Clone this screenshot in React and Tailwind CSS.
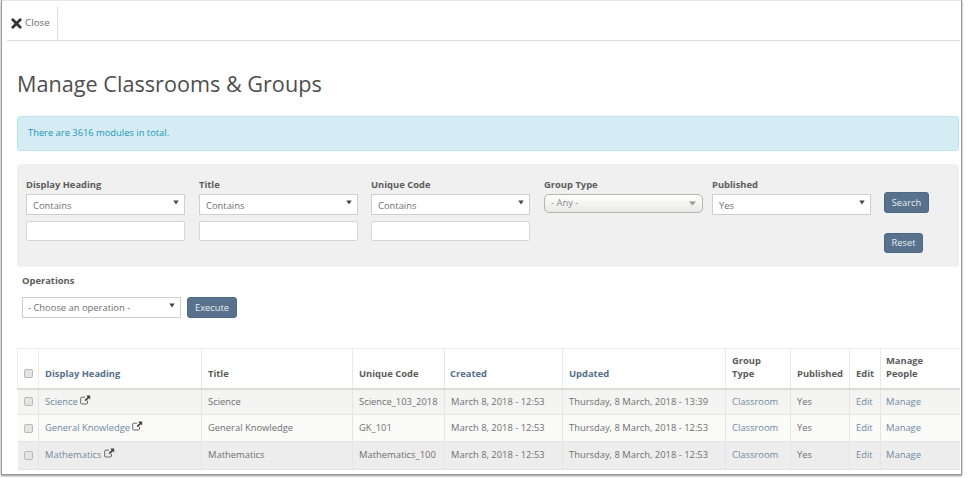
import React from "react";

const Caret = () => (
  <svg width="6" height="5" viewBox="0 0 6 5" className="absolute right-[5px] top-[5px]">
    <path d="M0.3 0.5h5.4L3 4.5z" fill="#444" />
  </svg>
);

const Select = ({ value, cls = "pl-[6px] pt-[3px]" }) => (
  <div className={`relative w-[159px] h-[21px] bg-white border border-[#cfcfcf] flex items-center text-[9.4px] text-[#707070] ${cls}`}>
    {value}
    <Caret />
  </div>
);

const Input = () => <div className="w-[159px] h-[20px] bg-white border border-[#d6d6d6] rounded-[2px]" />;

const Label = ({ children }) => <div className="text-[9.4px] font-bold text-[#5c5c5c] leading-[13px] mb-[3px]">{children}</div>;

const Filter = ({ label, value }) => (
  <div className="w-[159px] flex flex-col">
    <Label>{label}</Label>
    <Select value={value} />
    <div className="mt-[6px]"><Input /></div>
  </div>
);

const Btn = ({ children, cls = "" }) => (
  <div className={`bg-[#58718d] border border-[#506983] rounded-[3px] text-[#e9edf1] text-[9.3px] flex items-center justify-center ${cls}`}>{children}</div>
);

const Ext = () => (
  <svg width="11" height="10" viewBox="0 0 11 10" className="inline-block ml-[2px] align-[0px]">
    <path d="M7.5 5.8V8a1 1 0 0 1-1 1H1.7a1 1 0 0 1-1-1V3.2a1 1 0 0 1 1-1H5" fill="none" stroke="#666" strokeWidth="1" />
    <path d="M6.2 0.6h4v4l-1.4-1.3-3 3-1.2-1.2 3-3z" fill="#444" />
  </svg>
);

const Check = () => <div className="w-[9px] h-[9px] mx-auto bg-[#e4e4e4] border border-[#b9b9b9] rounded-[2px]" />;

const rows = [
  { h: "Science", t: "Science", c: "Science_103_2018", u: "13:39", bg: "bg-[#f4f4f2]", rh: "h-[26px]" },
  { h: "General Knowledge", t: "General Knowledge", c: "GK_101", u: "12:53", bg: "bg-[#fafaf8]", rh: "h-[27px]" },
  { h: "Mathematics", t: "Mathematics", c: "Mathematics_100", u: "12:53", bg: "bg-[#eeeded]", rh: "h-[28px]" },
];

const cols = [21, 163, 151, 92, 118, 163, 65, 59, 31, 79];
const th = "border-r border-[#e8e8e8] px-[6px] pb-[7px] align-bottom text-left font-bold text-[9.4px] leading-[13.5px]";
const dark = "text-[#5c5c5c]";
const blue = "text-[#566f8d]";
const td = "border-r border-[#e4e4e4] px-[6px] align-middle text-[9.4px] text-[#707070] whitespace-nowrap";
const link = "text-[#7189a3]";

export default function App() {
  return (
    <div className="w-[968px] h-[478px] overflow-hidden bg-white pl-[1px]" style={{ fontFamily: '"Open Sans", sans-serif' }}>
      <div className="w-[961px] h-[475px] bg-white border-l border-r border-b border-[#9a9a9a] shadow-[0_1px_2px_rgba(0,0,0,0.45)] border-t-0 overflow-hidden flex flex-col">
        <div className="border-t border-[#e6e6e6] pt-[5px] pl-[5px] pr-[1px]">
          <div className="h-[35px] border-b border-[#dcdcdc] flex">
            <div className="w-[51px] border-r border-[#dcdcdc] flex items-center pl-[4px] gap-[3px] text-[9.8px] text-[#6e6e6e]">
              <svg width="11" height="11" viewBox="0 0 11 11"><path d="M1.8 1.8 9.2 9.2M9.2 1.8 1.8 9.2" stroke="#333" strokeWidth="2.8" strokeLinecap="round" /></svg>
              Close
            </div>
          </div>
        </div>

        <div className="pl-[15px] pr-[2px] flex flex-col">
          <h1 className="mt-[26px] text-[21.65px] leading-[34px] text-[#4e4e4e] font-normal">Manage Classrooms &amp; Groups</h1>
          <div className="mt-[15px] h-[35px] bg-[#d5ecf4] border border-[#bde5ee] rounded-[3px] flex items-center pl-[10px] text-[9.35px] text-[#2197b8]">
            There are 3616 modules in total.
          </div>

          <div className="mt-[13px] h-[103px] bg-[#f0f0f0] rounded-[4px] pl-[9px] pt-[14px] flex">
            <Filter label="Display Heading" value="Contains" />
            <div className="w-[14px]" />
            <Filter label="Title" value="Contains" />
            <div className="w-[13px]" />
            <Filter label="Unique Code" value="Contains" />
            <div className="w-[14px]" />
            <div className="w-[159px]">
              <Label>Group Type</Label>
              <div className="relative h-[19px] rounded-[5px] border border-[#b5b5b0] bg-gradient-to-b from-white to-[#e8e8e6] flex items-center pl-[6px] text-[9.4px] text-[#8c8c8c]">
                - Any -
                <svg width="7" height="5" viewBox="0 0 7 5" className="absolute right-[6px] top-[6px]"><path d="M0 0.5h7L3.5 4.5z" fill="#9a9a9a" /></svg>
              </div>
            </div>
            <div className="w-[9px]" />
            <div className="w-[159px]">
              <Label>Published</Label>
              <Select value="Yes" />
            </div>
            <div className="w-[13px]" />
            <div className="flex flex-col pt-[14px]">
              <Btn cls="w-[45px] h-[21px]">Search</Btn>
              <Btn cls="w-[39px] h-[20px] mt-[20px]">Reset</Btn>
            </div>
          </div>

          <div className="pl-[5px] mt-[7px]">
            <div className="text-[9.4px] font-bold text-[#5c5c5c] leading-[13px]">Operations</div>
            <div className="flex items-center gap-[6px] mt-[10px]">
              <Select value="- Choose an operation -" cls="pl-[5px] pt-[2px]" />
              <Btn cls="w-[50px] h-[21px] pt-[1px]">Execute</Btn>
            </div>
          </div>

          <table className="mt-[30px] w-[942px] table-fixed border-collapse border-t border-[#ececec]">
            <colgroup>
              {cols.map((w, i) => <col key={i} style={{ width: w }} />)}
            </colgroup>
            <thead>
              <tr className="h-[40px] border-b-[2px] border-[#dcdbd8]">
                <th className={`${th} ${dark} border-l border-[#ececec]`}><div className="pb-[3px]"><Check /></div></th>
                <th className={`${th} ${blue}`}>Display Heading</th>
                <th className={`${th} ${dark}`}>Title</th>
                <th className={`${th} ${dark}`}>Unique Code</th>
                <th className={`${th} ${blue} pl-[5px]`}>Created</th>
                <th className={`${th} ${blue}`}>Updated</th>
                <th className={`${th} ${dark}`}>Group<br />Type</th>
                <th className={`${th} ${dark}`}>Published</th>
                <th className={`${th} ${dark}`}>Edit</th>
                <th className={`${th} ${dark} border-r-0 pl-[5px]`}>Manage<br />People</th>
              </tr>
            </thead>
            <tbody>
              {rows.map((r) => (
                <tr key={r.h} className={`${r.rh} ${r.bg} border-b border-[#e4e4e4]`}>
                  <td className={`${td} px-0`}><Check /></td>
                  <td className={td}><span className={link}>{r.h}</span><Ext /></td>
                  <td className={td}>{r.t}</td>
                  <td className={td}>{r.c}</td>
                  <td className={td}>March 8, 2018 - 12:53</td>
                  <td className={td}>Thursday, 8 March, 2018 - {r.u}</td>
                  <td className={td}><span className={link}>Classroom</span></td>
                  <td className={td}>Yes</td>
                  <td className={td}><span className={link}>Edit</span></td>
                  <td className={`${td} border-r-0 pl-[5px]`}><span className={link}>Manage</span></td>
                </tr>
              ))}
            </tbody>
          </table>
        </div>
      </div>
    </div>
  );
}
